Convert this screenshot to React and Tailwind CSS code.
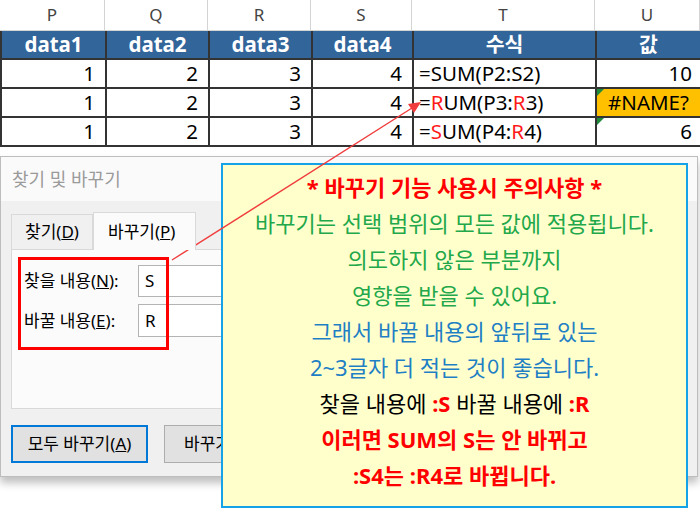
import React from "react";

const font = { fontFamily: "'Noto Sans', 'Noto Sans CJK KR', sans-serif" };

const letters = [
  ["P", "w-[105px]"],
  ["Q", "w-[103px]"],
  ["R", "w-[103px]"],
  ["S", "w-[101px]"],
  ["T", "w-[183px]"],
  ["U", "w-[105px]"],
];

function Cell({ w, className = "", children }) {
  return (
    <div className={`${w} h-[29px] shrink-0 border-r-2 border-b-2 border-[#333] flex items-center ${className}`}>
      {children}
    </div>
  );
}

function Tri() {
  return (
    <div className="absolute left-0 top-0 w-0 h-0 border-t-[7px] border-t-[#1f8a3c] border-r-[7px] border-r-transparent" />
  );
}

function DataRow({ formula, value, error, tri }) {
  return (
    <div className="flex">
      <Cell w="w-[105px]" className="justify-end pr-[10px]">1</Cell>
      <Cell w="w-[103px]" className="justify-end pr-[10px]">2</Cell>
      <Cell w="w-[103px]" className="justify-end pr-[10px]">3</Cell>
      <Cell w="w-[101px]" className="justify-end pr-[10px]">4</Cell>
      <Cell w="w-[183px]" className="pl-[5px]">{formula}</Cell>
      <Cell
        w="w-[105px]"
        className={`relative ${error ? "bg-[#ffc000] justify-center" : "justify-end pr-[8px]"}`}
      >
        {tri && <Tri />}
        {value}
      </Cell>
    </div>
  );
}

const R = ({ children }) => <span className="text-[#ff1a1a]">{children}</span>;

export default function App() {
  return (
    <div className="relative w-[700px] h-[512px] bg-white overflow-hidden" style={font}>
      {/* Spreadsheet */}
      <div className="flex h-[31px] bg-white border-b border-[#d4d4d4]">
        {letters.map(([l, w]) => (
          <div
            key={l}
            className={`${w} shrink-0 flex items-center justify-center text-[17px] text-[#444] border-r border-[#d4d4d4]`}
          >
            {l}
          </div>
        ))}
      </div>
      <div className="border-l-2 border-[#333] text-[20.5px] text-black leading-none">
        <div className="flex bg-[#326599] text-white font-bold">
          <Cell w="w-[105px]" className="justify-center">data1</Cell>
          <Cell w="w-[103px]" className="justify-center">data2</Cell>
          <Cell w="w-[103px]" className="justify-center">data3</Cell>
          <Cell w="w-[101px]" className="justify-center">data4</Cell>
          <Cell w="w-[183px]" className="justify-center">수식</Cell>
          <Cell w="w-[105px]" className="justify-center">값</Cell>
        </div>
        <DataRow formula={<span>=SUM(P2:S2)</span>} value="10" />
        <DataRow
          formula={
            <span>
              =<R>R</R>UM(P3:<R>R</R>3)
            </span>
          }
          value="#NAME?"
          error
          tri
        />
        <DataRow
          formula={
            <span>
              =<R>S</R>UM(P4:<R>R</R>4)
            </span>
          }
          value="6"
          tri
        />
      </div>

      {/* Dialog */}
      <div className="mt-[9px] w-[698px] h-[321px] border border-[#bdbdbd] bg-[#f0f0f0] shadow-[0_6px_8px_rgba(0,0,0,0.25)] flex flex-col">
        <div className="h-[44px] bg-[#fafafa] flex items-center px-[11px] text-[18px] text-[#9a9a9a] shrink-0">
          찾기 및 바꾸기
        </div>
        <div className="flex-1 px-[10px] pt-[11px] text-[17px] text-black">
          <div className="flex items-end h-[37px]">
            <div className="w-[82px] h-[35px] border border-b-0 border-[#d9d9d9] bg-[#f0f0f0] flex items-center pl-[13px]">
              찾기(<u>D</u>)
            </div>
            <div className="w-[103px] h-[38px] border border-b-0 border-[#d9d9d9] bg-[#fbfbfb] flex items-center pl-[14px] -mb-px relative z-10">
              바꾸기(<u>P</u>)
            </div>
          </div>
          <div className="relative h-[160px] border border-[#d9d9d9] bg-[#fbfbfb] pt-[15px] flex flex-col gap-[7px]">
            <div className="flex items-center h-[32px]">
              <div className="w-[126px] pl-[12px]">
                찾을 내용(<u>N</u>):
              </div>
              <div className="flex-1 h-[32px] border border-[#b4b4b4] bg-white flex items-center pl-[6px] mr-[10px]">
                S
              </div>
            </div>
            <div className="flex items-center h-[33px]">
              <div className="w-[126px] pl-[12px]">
                바꿀 내용(<u>E</u>):
              </div>
              <div className="flex-1 h-[33px] border border-[#b4b4b4] bg-white flex items-center pl-[6px] mr-[10px]">
                R
              </div>
            </div>
            <div className="absolute left-[6px] top-[7px] w-[151px] h-[93px] border-[3px] border-[#ff0000]" />
          </div>
          <div className="flex gap-[16px] mt-[16px]">
            <div className="w-[137px] h-[38px] bg-[#e1e1e1] border-2 border-[#0078d7] flex items-center justify-center">
              모두 바꾸기(<u>A</u>)
            </div>
            <div className="w-[137px] h-[38px] bg-[#e1e1e1] border border-[#adadad] flex items-center pl-[19px]">
              바꾸기(<u>R</u>)
            </div>
          </div>
        </div>
      </div>

      {/* Note box */}
      <div className="absolute left-[221px] top-[163px] w-[467px] h-[345px] bg-[#ffffcc] border-2 border-[#16a2e6] pt-[4px] text-center text-[22px] leading-[36px]">
        <div className="font-bold text-[#ff0000]">* 바꾸기 기능 사용시 주의사항 *</div>
        <div className="text-[#22a84a]">바꾸기는 선택 범위의 모든 값에 적용됩니다.</div>
        <div className="text-[#22a84a]">의도하지 않은 부분까지</div>
        <div className="text-[#22a84a]">영향을 받을 수 있어요.</div>
        <div className="text-[#1f7fc4]">그래서 바꿀 내용의 앞뒤로 있는</div>
        <div className="text-[#1f7fc4]">2~3글자 더 적는 것이 좋습니다.</div>
        <div className="text-black">
          찾을 내용에 <span className="font-bold text-[#ff0000]">:S</span> 바꿀 내용에{" "}
          <span className="font-bold text-[#ff0000]">:R</span>
        </div>
        <div className="font-bold text-[#ff0000]">이러면 SUM의 S는 안 바뀌고</div>
        <div className="font-bold text-[#ff0000]">:S4는 :R4로 바뀝니다.</div>
      </div>

      {/* Arrow */}
      <svg className="absolute left-0 top-0 pointer-events-none" width="700" height="512">
        <line x1="172" y1="260" x2="412" y2="108" stroke="#f03c3c" strokeWidth="1.4" />
        <polygon points="421,102 408,104 414,113" fill="#f03c3c" />
      </svg>
    </div>
  );
}
